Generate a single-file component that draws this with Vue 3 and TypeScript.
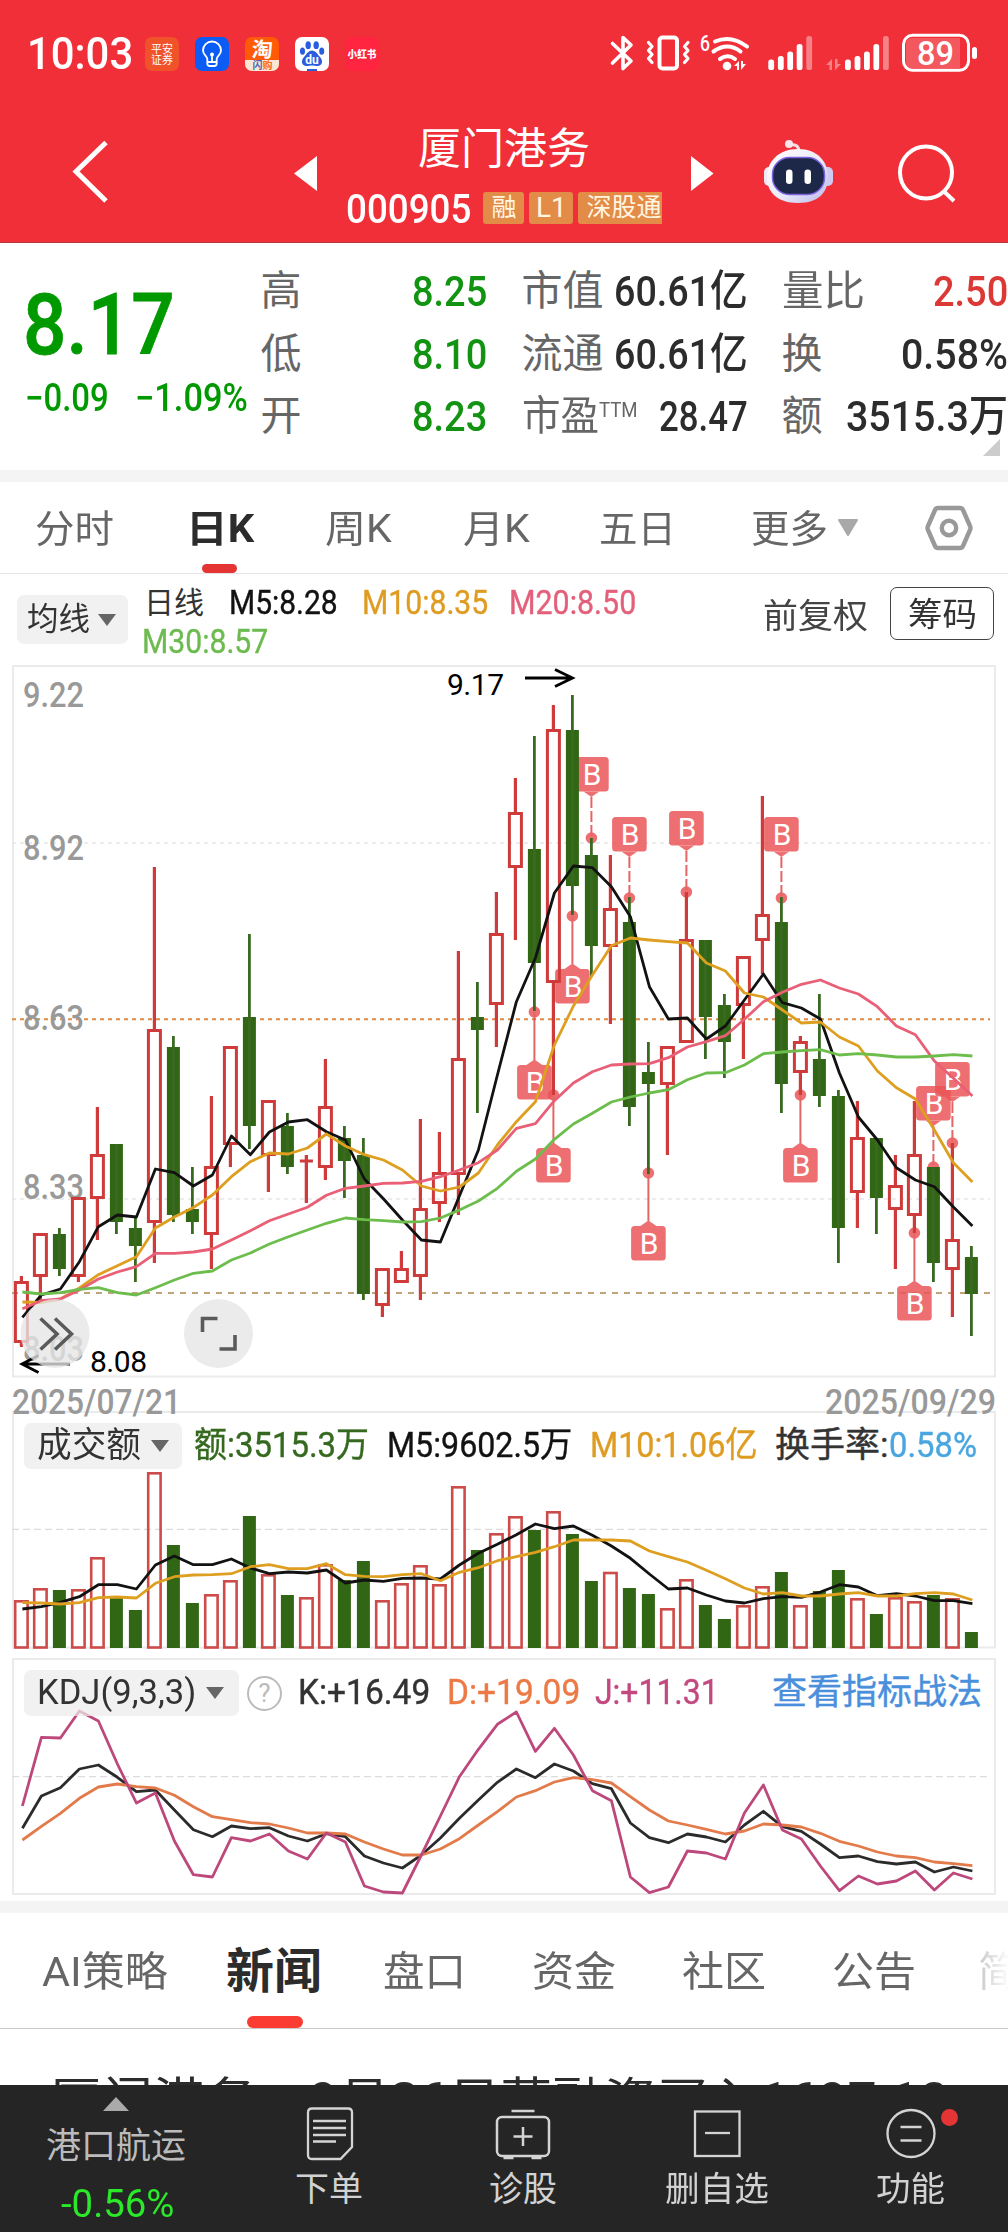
<script setup lang="ts">
import type { Directive } from 'vue'

const applyFit = (el: HTMLElement, width: number) => {
  const natural = el.offsetWidth
  if (!natural) return
  el.style.transform = `scaleX(${width / natural})`
  el.style.marginRight = `${width - natural}px`
}
const vFit: Directive<HTMLElement, number> = {
  mounted: (el, binding) => applyFit(el, binding.value),
}

type Candle = [number, number, number, number, number]
/* up(1) / down(0), high, body top, body bottom, low */
const candles: Candle[] = [
  [1, 1276, 1281, 1343, 1347], [1, 1233, 1233, 1277, 1300], [0, 1228, 1234, 1269, 1276], [1, 1197, 1197, 1277, 1282],
  [1, 1107, 1154, 1199, 1240], [0, 1144, 1144, 1222, 1234], [0, 1217, 1228, 1246, 1282], [1, 867, 1029, 1223, 1263],
  [0, 1036, 1047, 1215, 1222], [0, 1167, 1209, 1222, 1234], [1, 1096, 1166, 1235, 1269], [1, 1046, 1046, 1145, 1167],
  [0, 934, 1017, 1126, 1149], [1, 1100, 1100, 1156, 1192], [0, 1113, 1126, 1167, 1174], [1, 1155, 1159.5, 1162.5, 1203],
  [1, 1059, 1106, 1168, 1180], [0, 1126, 1138, 1161, 1198], [0, 1138, 1155, 1294, 1300], [1, 1268, 1268, 1306, 1317],
  [1, 1251, 1268, 1283, 1283], [1, 1119, 1208, 1277, 1300], [1, 1132, 1172, 1204, 1222], [1, 951, 1058, 1175, 1215],
  [0, 982, 1017, 1030, 1113], [1, 892, 933, 1005, 1047], [1, 778, 812, 868, 940], [0, 736, 849, 963, 1011],
  [1, 705, 729, 983, 1095], [0, 695, 730, 886, 915], [0, 838, 855, 946, 976], [1, 855, 908, 947, 1024],
  [0, 897, 922, 1107, 1126], [0, 1042, 1072, 1084, 1174], [1, 1046, 1046, 1085, 1155], [1, 892, 939, 1043, 1043],
  [0, 940, 940, 1017, 1059], [0, 994, 1005, 1042, 1078], [1, 956, 956, 1006, 1059], [1, 796, 914, 941, 974],
  [0, 897, 922, 1084, 1113], [1, 1036, 1041, 1073, 1095], [0, 994, 1059, 1096, 1107], [0, 1090, 1096, 1228, 1263],
  [1, 1101, 1137, 1193, 1228], [0, 1138, 1138, 1198, 1234], [1, 1155, 1185, 1210, 1269], [1, 1101, 1154, 1216, 1233],
  [0, 1167, 1167, 1263, 1282], [1, 1143, 1239, 1270, 1317], [0, 1246, 1257, 1294, 1336],
]
const cx = (i: number) => 21.4 + i * 19
const line = (ys: number[]) => ys.map((y, i) => `${(cx(i) + 1).toFixed(1)},${y}`).join(' ')

const ma = [
  { color: '#121212', pts: line([1317.3, 1295, 1289, 1261.7, 1226.7, 1215, 1217, 1169, 1172.7, 1186, 1175, 1136, 1154.7, 1132, 1122, 1119.7, 1131.7, 1140, 1179, 1198.7, 1220, 1240, 1242, 1196, 1150, 1075, 1001.7, 958, 893, 866, 867.7, 886.7, 916.7, 986.7, 1019, 1018, 1039, 1026, 1000, 974, 1002.7, 1008, 1019, 1073, 1117, 1140, 1167.7, 1180, 1186.7, 1207, 1226]) },
  { color: '#de9f20', pts: line([1302, 1302.5, 1299, 1288, 1274.7, 1265.7, 1256.7, 1228, 1217, 1207.5, 1195, 1176.7, 1161.7, 1153, 1154, 1148, 1134, 1146, 1154.7, 1160, 1170, 1186, 1191, 1187, 1173, 1145, 1121.7, 1101.7, 1045, 1006, 975, 945.7, 938, 940, 941.7, 943, 963, 971, 993, 997, 1010, 1023, 1022, 1037, 1046, 1071, 1087.7, 1099, 1130, 1162.7, 1182]) },
  { color: '#e85f76', pts: line([1308.7, 1300.7, 1299, 1290, 1279, 1272, 1266.7, 1253.3, 1253.3, 1252, 1249, 1240, 1230.7, 1220.7, 1214, 1207.3, 1195.3, 1188.3, 1186, 1183.3, 1183, 1181.3, 1176.7, 1170, 1162.7, 1150, 1128.3, 1123.7, 1100.7, 1083, 1071.7, 1065, 1064, 1063.7, 1057.7, 1047, 1041.7, 1035.7, 1019.3, 1001.7, 992.3, 984.3, 980, 988, 994, 1006.7, 1026, 1034.7, 1061, 1078.3, 1096]) },
  { color: '#6cbd4c', pts: line([1292, 1294, 1292.7, 1289.3, 1287.7, 1292.7, 1295, 1287.7, 1280, 1273.3, 1271, 1260, 1253, 1244, 1236.7, 1230, 1223.3, 1218, 1219.7, 1220.7, 1222, 1221.7, 1218, 1210, 1201, 1188.3, 1171.3, 1159, 1139.3, 1124, 1113.3, 1102, 1097, 1093, 1089.7, 1079.7, 1073, 1072.7, 1065, 1053.7, 1052, 1050.7, 1049.7, 1055, 1053.7, 1055, 1057, 1057, 1056, 1054.7, 1056]) },
]

/* Buy signals: candle index, anchor dot, whether the flag hangs above the dot */
const signals = [
  { i: 27, y: 1012, above: false }, { i: 28, y: 1095, above: false }, { i: 29, y: 916, above: false },
  { i: 30, y: 838, above: true }, { i: 32, y: 898, above: true }, { i: 33, y: 1173, above: false },
  { i: 35, y: 892, above: true }, { i: 40, y: 898, above: true }, { i: 41, y: 1095, above: false },
  { i: 47, y: 1233, above: false }, { i: 48, y: 1167, above: true }, { i: 49, y: 1143, above: true },
].map((s) => ({ ...s, x: cx(s.i), top: s.above ? s.y - 81 : s.y + 53 }))

const flagPath = (s: { x: number; top: number; above: boolean }) =>
  s.above
    ? `M${s.x - 8} ${s.top + 34.5}h16l-8 5.5z`
    : `M${s.x - 8} ${s.top}h16l-8 -5.5z`

const volumes = [1600, 1588, 1590, 1589, 1557, 1597.7, 1610, 1472, 1545, 1603, 1594, 1580, 1516, 1574, 1595, 1597, 1564, 1580, 1561, 1600, 1583, 1565, 1584, 1486, 1550, 1533, 1516, 1530, 1511, 1534, 1581, 1571.7, 1588, 1594, 1608, 1579, 1605, 1619, 1605, 1586, 1572, 1605, 1591, 1570, 1598, 1614, 1597, 1601, 1595, 1598, 1632]
const volumeMa = [
  { color: '#121212', pts: line([1609, 1606.7, 1602.3, 1596.7, 1584.7, 1584.7, 1589, 1565, 1556, 1564.7, 1564.7, 1559, 1568, 1573.7, 1572, 1573, 1570, 1583, 1580, 1581.3, 1578.3, 1578, 1579, 1565, 1553.3, 1544.3, 1534.7, 1524, 1528.7, 1526, 1535.3, 1546, 1558.3, 1574, 1589, 1588, 1595, 1601, 1603, 1598.7, 1596.7, 1597.3, 1592, 1584.7, 1587, 1595.7, 1593.7, 1596, 1600.7, 1600.7, 1603.7]) },
  { color: '#de9f20', pts: line([1602.7, 1603, 1604, 1602.7, 1597.7, 1597, 1598, 1583.3, 1576.7, 1575, 1574.7, 1573.7, 1566.7, 1564.7, 1568.7, 1568.7, 1563.7, 1574.7, 1576.3, 1576.7, 1574.7, 1573.7, 1580.7, 1572.3, 1567.7, 1560.7, 1556.7, 1552.3, 1546.7, 1540, 1540, 1540, 1541, 1551, 1556.7, 1562, 1570.3, 1578.7, 1588, 1594, 1592.7, 1596, 1596, 1594, 1592.7, 1596, 1596, 1593.7, 1592.7, 1594, 1600]) },
]
const kdj = [
  { color: '#2b2b2b', pts: line([1828.3, 1796, 1787.7, 1769, 1765, 1777.3, 1791.7, 1790, 1810, 1829.7, 1836.7, 1826, 1828.7, 1827.7, 1836, 1841, 1833.7, 1836.7, 1856, 1863, 1868, 1855, 1838, 1818.3, 1800, 1782.3, 1769, 1777.7, 1764, 1771, 1783.7, 1788.7, 1823, 1837.7, 1842.7, 1834, 1837, 1842, 1825, 1811.3, 1826.7, 1831.3, 1844, 1857.7, 1856, 1861.7, 1864, 1862, 1872, 1867, 1871]) },
  { color: '#e27a4a', pts: line([1840, 1826.3, 1813.3, 1798.3, 1787, 1784, 1786.7, 1788, 1795.3, 1806.7, 1816.7, 1819.7, 1822.7, 1824, 1828, 1833, 1833, 1834, 1842, 1849, 1855, 1855, 1849, 1838.7, 1825, 1811.7, 1797, 1790.7, 1782, 1777.7, 1779.7, 1783, 1796.7, 1810, 1821, 1825, 1829.3, 1834, 1831, 1824, 1825, 1827, 1833.3, 1841.3, 1846, 1852, 1856, 1857.7, 1862, 1863.7, 1865.7]) },
  { color: '#bd487c', pts: line([1806, 1737.3, 1738, 1711, 1721, 1764, 1803, 1793, 1841, 1874.7, 1877, 1837.7, 1841, 1834, 1851, 1859, 1833, 1842, 1886, 1892, 1893, 1855, 1816, 1776.7, 1749.3, 1724.3, 1712, 1751.3, 1728.3, 1755, 1790.7, 1800.7, 1877, 1892.7, 1887, 1851, 1853, 1859, 1813, 1785, 1830, 1839, 1866, 1890.7, 1876, 1884, 1881, 1871, 1890, 1873, 1879]) },
]
const priceTicks = [
  { label: '9.22', y: 707 }, { label: '8.92', y: 860 }, { label: '8.63', y: 1030 }, { label: '8.33', y: 1199 }, { label: '8.03', y: 1361 },
]
const bars = [
  { x: 0, y: 59.5 }, { x: 9.6, y: 56 }, { x: 19, y: 51.5 }, { x: 28.4, y: 44 }, { x: 38, y: 36 },
]
</script>

<template>
  <div class="page">
    <header class="head">
      <div class="status">
        <span class="clock" v-fit="106">10:03</span>
        <div class="apps">
          <svg class="app" viewBox="0 0 34 34"><rect width="34" height="34" rx="7" fill="#f0522a" /><g fill="#fff" font-size="11" text-anchor="middle"><text x="17" y="16" textLength="22">平安</text><text x="17" y="26.5" textLength="22">证券</text></g></svg>
          <svg class="app" viewBox="0 0 34 34"><rect width="34" height="34" rx="7" fill="#0b5cf5" /><g fill="none" stroke="#fff" stroke-width="1.8"><path d="M12.3 22c0-3-4.3-4.200-4.300-8.500a9 9 0 0 1 18 0c0 4.300-4.300 5.500-4.300 8.500v4.500c0 1.500-1 2.500-2.500 2.500h-4.400c-1.500 0-2.500-1-2.500-2.500zM12.300 25h9.400M17 18v7" /></g><circle cx="17" cy="17.500" r="2" fill="#fff" /></svg>
          <svg class="app" viewBox="0 0 34 34"><defs><clipPath id="tb"><rect width="34" height="34" rx="7" /></clipPath></defs><g clip-path="url(#tb)"><rect width="34" height="34" fill="#ff5a05" /><rect y="23" width="34" height="11" fill="#fbe6d6" /></g><text x="17" y="19.500" font-size="21" font-weight="700" fill="#fff" text-anchor="middle" transform="skewX(-4) translate(1 0)">淘</text><text x="17.500" y="32" font-size="10" font-weight="700" text-anchor="middle"><tspan fill="#4a68b8">闪</tspan><tspan fill="#ff6a10">购</tspan></text></svg>
          <svg class="app" viewBox="0 0 34 34"><rect width="34" height="34" rx="7" fill="#fff" /><g fill="#2a5ddd"><ellipse cx="13.200" cy="8.200" rx="2.700" ry="3.900" /><ellipse cx="21.200" cy="8.200" rx="2.700" ry="3.900" /><ellipse cx="7.500" cy="14.200" rx="2.500" ry="3.600" /><ellipse cx="26.700" cy="14.200" rx="2.500" ry="3.600" /><path d="M17 13.500c4 0 5.500 4 8 6.500 3.500 3.500 2.500 9-2.500 9-2 0-3.500-.5-5.500-.5s-3.500.5-5.500.5c-5 0-6-5.500-2.500-9 2.500-2.500 4-6.500 8-6.500z" /><rect x="12" y="32" width="10" height="2" /></g><text x="17" y="26.500" font-size="12" font-weight="700" fill="#fff" text-anchor="middle">du</text></svg>
          <svg class="app" viewBox="0 0 34 34"><rect width="34" height="34" rx="7" fill="#ff2440" /><text x="17" y="21" font-size="10" font-weight="900" fill="#fff" text-anchor="middle" textLength="29" lengthAdjust="spacingAndGlyphs">小红书</text></svg>
        </div>
        <div class="sys">
          <svg width="36" height="44" viewBox="604 32 36 44"><path d="M612.500 43.500L631 61l-8 7.500v-31l8 7.500-18.500 18" fill="none" stroke="#fff" stroke-width="3.600" stroke-linejoin="round" stroke-linecap="round" /></svg>
          <svg width="54" height="44" viewBox="640 32 54 44"><g fill="none" stroke="#fff" stroke-width="4" stroke-linejoin="round"><rect x="659.500" y="37.500" width="17.500" height="31" rx="3" /><path stroke-width="3.200" stroke-linecap="round" d="M648.500 42.500l3.500 4-3.500 4 3.500 4-3.500 4 3.500 4M688 42.500l-3.500 4 3.500 4-3.500 4 3.500 4-3.500 4" /></g></svg>
          <svg width="62" height="44" viewBox="694 32 62 44"><text x="700" y="51" font-size="22" font-weight="500" fill="#fff" textLength="10" lengthAdjust="spacingAndGlyphs">6</text><g fill="none" stroke="#fff" stroke-width="4" stroke-linecap="round"><path d="M715 41.500q16-7 32 5" /><path d="M713.500 51.500q14-10 27 0" /><path d="M720 59q8-5.500 15 0" /></g><circle cx="727" cy="66" r="4.300" fill="#fff" /><path d="M734 66l5-5v9h-2v-4zM746 64l-5 6v-9h2v3z" fill="#fff" /></svg>
          <svg width="60" height="44" viewBox="756 32 60 44"><rect v-for="b in bars" :key="b.x" :x="768.300 + b.x" :y="b.y" width="5.800" :height="70 - b.y" rx="2.600" fill="#fff" :opacity="b.x === 38 ? 0.4 : 1" /></svg>
          <svg width="78" height="44" viewBox="816 32 78 44"><path d="M826 65l6-6v11h-2.500v-5zM841 64l-6 6v-11h2.500v5z" fill="#fff" opacity=".4" /><rect v-for="b in bars" :key="b.x" :x="845 + b.x" :y="b.y" width="5.800" :height="70 - b.y" rx="2.600" fill="#fff" :opacity="b.x === 38 ? 0.4 : 1" /></svg>
          <svg width="90" height="44" viewBox="894 32 90 44"><rect x="903.500" y="35.300" width="65" height="35" rx="9" fill="none" stroke="#fff" stroke-width="3" /><path d="M912 38h48v30h-48q-6 0-6-6v-18q0-6 6-6z" fill="#fff" opacity=".2" /><rect x="972" y="47" width="5" height="12" rx="2.500" fill="#fff" /><text x="917" y="65" font-size="33" font-weight="500" fill="#fff" textLength="37" lengthAdjust="spacingAndGlyphs">89</text></svg>
        </div>
      </div>
      <div class="titlebar">
        <svg class="back" width="60" height="80" viewBox="60 132 60 80"><path d="M106 142.500L76 171.500l30 29.500" fill="none" stroke="#fff" stroke-width="5" /></svg>
        <svg class="prev" width="30" height="40" viewBox="290 153 30 40"><path d="M294 173.500L317 156v35z" fill="#fff" /></svg>
        <div class="name">
          <div class="title"><span v-fit="172">厦门港务</span></div>
          <div class="sub"><span class="code" v-fit="125">000905</span><i class="tag t1">融</i><i class="tag t2">L1</i><i class="tag t3">深股通</i></div>
        </div>
        <svg class="next" width="30" height="40" viewBox="688 153 30 40"><path d="M713.500 173.500L691 156v35z" fill="#fff" /></svg>
        <svg class="robot" width="74" height="70" viewBox="762 136 74 70">
          <defs><linearGradient id="shell" x1="0" y1="0" x2="1" y2="1"><stop offset="0" stop-color="#fff" /><stop offset=".55" stop-color="#eceaf8" /><stop offset="1" stop-color="#b9b7ec" /></linearGradient></defs>
          <path d="M789 145q10-2 10 7" fill="none" stroke="#f4dbe6" stroke-width="3" /><circle cx="789" cy="144" r="4" fill="#fbe4ea" />
          <rect x="764" y="167" width="12" height="19" rx="5" fill="#f0e9f5" /><rect x="821" y="167" width="12" height="19" rx="5" fill="#cfcaf2" />
          <path d="M798 149c20 0 30 13 30 28s-9 26-30 26-31-11-31-26 11-28 31-28z" fill="url(#shell)" />
          <rect x="772.500" y="157.500" width="52" height="37" rx="17" fill="#1d2747" stroke="#7b63e0" stroke-width="1.500" />
          <rect x="786" y="169.500" width="6.500" height="14.500" rx="3.200" fill="#fff" /><rect x="804.500" y="169.500" width="6.500" height="14.500" rx="3.200" fill="#fff" />
        </svg>
        <svg class="search" width="64" height="64" viewBox="896 142 64 64"><g fill="none" stroke="#fff" stroke-width="4"><circle cx="926" cy="172.500" r="26" /><path d="M943 190.500l11 10.500" /></g></svg>
      </div>
    </header>

    <section class="quote">
      <div class="main">
        <div class="price"><span v-fit="152">8.17</span></div>
        <div class="chg"><span class="c1" v-fit="84">−0.09</span><span v-fit="113">−1.09%</span></div>
      </div>
      <div class="stats">
        <div class="row">
          <b><span v-fit="41">高</span></b><em class="v1 g"><span v-fit="75">8.25</span></em>
          <b><span v-fit="82">市值</span></b><em class="v2"><span v-fit="134">60.61亿</span></em>
          <b><span v-fit="83">量比</span></b><em class="v3 r"><span v-fit="75">2.50</span></em>
        </div>
        <div class="row">
          <b><span v-fit="41">低</span></b><em class="v1 g"><span v-fit="75">8.10</span></em>
          <b><span v-fit="82">流通</span></b><em class="v2"><span v-fit="134">60.61亿</span></em>
          <b><span v-fit="41">换</span></b><em class="v3"><span v-fit="107">0.58%</span></em>
        </div>
        <div class="row">
          <b><span v-fit="41">开</span></b><em class="v1 g"><span v-fit="75">8.23</span></em>
          <b class="pe"><span v-fit="77">市盈</span><sup v-fit="39">TTM</sup></b><em class="v2"><span v-fit="89">28.47</span></em>
          <b><span v-fit="41">额</span></b><em class="v3"><span v-fit="162">3515.3万</span></em>
        </div>
      </div>
      <svg class="corner" width="17" height="17"><path d="M0 17L17 0v17z" fill="#ccc" /></svg>
    </section>
    <div class="gap"></div>

    <nav class="ktabs">
      <span v-fit="79">分时</span>
      <span class="on" v-fit="68">日K</span>
      <span v-fit="67">周K</span>
      <span v-fit="67">月K</span>
      <span v-fit="77">五日</span>
      <span v-fit="77">更多</span>
      <svg class="more" width="22" height="18"><path d="M2 1h18L11 16z" fill="#a8a8a8" stroke="#a8a8a8" stroke-width="2" stroke-linejoin="round" /></svg>
      <svg class="gear" width="48" height="48" viewBox="926 504 48 48"><g fill="none" stroke="#999" stroke-width="4.400" stroke-linejoin="round"><path d="M939 508h22q2 0 3 2l7 16q1 2 0 4l-7 16q-1 2-3 2h-22q-2 0-3-2l-7-16q-1-2 0-4l7-16q1-2 3-2z" /><circle cx="950" cy="528" r="7.200" /></g></svg>
      <i class="mark"></i>
    </nav>

    <section class="maline">
      <div class="pick p1"><span v-fit="63">均线</span><svg width="18" height="12"><path d="M0 0h18L9 12z" fill="#666" /></svg></div>
      <div class="legend">
        <div class="lrow"><span class="rx" v-fit="60">日线</span><span class="k" v-fit="109">M5:8.28</span><span class="y" v-fit="126">M10:8.35</span><span class="p" v-fit="127">M20:8.50</span></div>
        <div class="lrow"><span class="n" v-fit="126">M30:8.57</span></div>
      </div>
      <div class="adj"><span v-fit="105">前复权</span></div>
      <div class="chip"><span v-fit="69">筹码</span></div>
    </section>

    <section class="pricechart">
      <svg width="1008" height="756" viewBox="0 665 1008 756">
        <rect x="13" y="666" width="982" height="710.500" fill="none" stroke="#ebebeb" stroke-width="2" />
        <g fill="none" stroke-width="1.600"><path d="M12 843H990M12 1199H990" stroke="#e6e6e6" stroke-dasharray="4 4" /><path d="M12 1019.300H990" stroke="#de8a45" stroke-width="2" stroke-dasharray="4 4" /><path d="M12 1293H990" stroke="#c0a47c" stroke-width="2" stroke-dasharray="6 6" /></g>
        <g fill="#999" font-size="35" font-weight="500"><text v-for="t in priceTicks" :key="t.label" x="23" :y="t.y" textLength="61" lengthAdjust="spacingAndGlyphs">{{ t.label }}</text></g>
        <g v-for="s in signals" :key="s.i" fill="#ea5456" stroke="none">
          <g opacity=".84">
            <rect :x="s.x - 17.300" :y="s.top" width="34.600" height="34.500" rx="3.500" />
            <path :d="flagPath(s)" />
            <circle :cx="s.x" :cy="s.y" r="5.800" />
            <line :x1="s.x" :x2="s.x" :y1="s.above ? s.top + 40 : s.top - 5" :y2="s.y" stroke="#e04848" stroke-width="2" :stroke-dasharray="s.above ? '11 3' : undefined" />
          </g>
          <text :x="s.x + .6" :y="s.top + 27.500" font-size="30" fill="#fff" text-anchor="middle">B</text>
        </g>
        <g v-for="(c, i) in candles" :key="i">
          <template v-if="c[0]">
            <rect v-if="c[3] - c[2] > 4" :x="cx(i) - 6" :y="c[2] + 1.500" width="12" :height="c[3] - c[2] - 3" fill="none" stroke="#ce3b3a" stroke-width="3" />
            <rect v-else :x="cx(i) - 6.500" :y="c[2]" width="13" height="3" fill="#ce3b3a" />
            <path :d="`M${cx(i)} ${c[1]}V${c[2]}M${cx(i)} ${c[3]}V${c[4]}`" stroke="#ce3b3a" stroke-width="3.200" />
            <path v-if="c[3] - c[2] <= 4" :d="`M${cx(i)} ${c[1]}V${c[4]}`" stroke="#ce3b3a" stroke-width="3" />
          </template>
          <template v-else>
            <rect :x="cx(i) - 6.500" :y="c[2]" width="13" :height="c[3] - c[2]" fill="#316614" />
            <path :d="`M${cx(i)} ${c[1]}V${c[4]}`" stroke="#3a6a22" stroke-width="2.800" />
          </template>
        </g>
        <polyline v-for="m in ma" :key="m.color" :points="m.pts" fill="none" :stroke="m.color" stroke-width="2.800" stroke-linejoin="round" />
        <g fill="#000" font-size="30"><text x="447" y="695" textLength="57">9.17</text><text x="90" y="1372" textLength="57">8.08</text></g>
        <path d="M525 678H572M555 669.500L572.500 678L555 686.500M70 1364H22M38.500 1355.500L22 1364L38.500 1372.500" fill="none" stroke="#000" stroke-width="2.800" />
        <g fill="#999" font-size="35" font-weight="500"><text x="12" y="1413.500" textLength="169" lengthAdjust="spacingAndGlyphs">2025/07/21</text><text x="825" y="1413.500" textLength="171" lengthAdjust="spacingAndGlyphs">2025/09/29</text></g>
        <g fill="#e6e6e6" opacity=".78"><circle cx="55" cy="1333.500" r="34.500" /><circle cx="218.500" cy="1333.500" r="34.500" /></g>
        <path d="M40.500 1318.500L57 1334l-16.500 15.500M55 1318.500L71.500 1334 55 1349.500M202.500 1332v-13.500h15M235 1335v14h-15.500" fill="none" stroke="#5a5a5a" stroke-width="3.600" />
      </svg>
    </section>

    <section class="panel vol">
      <svg class="plot" width="1008" height="247" viewBox="0 1411 1008 247">
        <rect x="13" y="1412" width="982" height="235.500" fill="none" stroke="#ebebeb" stroke-width="2" />
        <path d="M12 1529.300H990" stroke="#dcdcdc" stroke-width="1.200" stroke-dasharray="7 4" />
        <template v-for="(v, i) in volumes" :key="i">
          <rect v-if="candles[i][0]" :x="cx(i) - 6.200" :y="v + 1.300" width="12.400" :height="1647.500 - v - 1.300" fill="none" stroke="#cd4c4a" stroke-width="2.600" />
          <rect v-else :x="cx(i) - 6.500" :y="v" width="13" :height="1648 - v" fill="#316614" />
        </template>
        <polyline v-for="m in volumeMa" :key="m.color" :points="m.pts" fill="none" :stroke="m.color" stroke-width="2.800" stroke-linejoin="round" />
      </svg>
      <div class="readout">
        <div class="pick p2"><span v-fit="104">成交额</span><svg width="18" height="12"><path d="M0 0h18L9 12z" fill="#666" /></svg></div>
        <span class="a1" v-fit="175">额:3515.3万</span><span class="a2" v-fit="185">M5:9602.5万</span><span class="a3" v-fit="168">M10:1.06亿</span><span class="a4" v-fit="113">换手率:</span><span class="a5" v-fit="88">0.58%</span>
      </div>
    </section>

    <section class="panel kdj">
      <svg class="plot" width="1008" height="243" viewBox="0 1658 1008 243">
        <rect x="13" y="1659" width="982" height="235" fill="none" stroke="#ebebeb" stroke-width="2" />
        <path d="M12 1776.600H990" stroke="#dcdcdc" stroke-width="1.200" stroke-dasharray="7 4" />
        <polyline v-for="m in kdj" :key="m.color" :points="m.pts" fill="none" :stroke="m.color" stroke-width="2.800" stroke-linejoin="round" />
      </svg>
      <div class="readout">
        <div class="pick p3"><span v-fit="159">KDJ(9,3,3)</span><svg width="18" height="12"><path d="M0 0h18L9 12z" fill="#666" /></svg></div>
        <i class="help">?</i>
        <span class="b1" v-fit="132">K:+16.49</span><span class="b2" v-fit="133">D:+19.09</span><span class="b3" v-fit="124">J:+11.31</span><span class="b4" v-fit="210">查看指标战法</span>
      </div>
    </section>
    <div class="gap"></div>

    <nav class="ntabs">
      <span v-fit="126">AI策略</span>
      <span class="on" v-fit="96">新闻</span>
      <span v-fit="83">盘口</span>
      <span v-fit="84">资金</span>
      <span v-fit="84">社区</span>
      <span v-fit="84">公告</span>
      <span class="fade">简况</span>
      <i class="mark"></i>
    </nav>
    <article class="news"><span v-fit="900">厦门港务：9月26日获融资买入1697.10</span></article>

    <footer class="foot">
      <div class="sector">
        <svg width="26" height="14"><path d="M0 14L13 0l13 14z" fill="#aaa" /></svg>
        <span class="s1" v-fit="140">港口航运</span>
        <span class="s2" v-fit="113">-0.56%</span>
      </div>
      <div class="act">
        <svg width="54" height="56" viewBox="301 2105 54 56"><path d="M311 2108.500h36q4 0 4 4v34.500l-11.500 12H311q-4 0-4-4v-42.500q0-4 4-4zM312 2121h33M312 2128h33M312 2135h33M312 2141.500h23" fill="none" stroke="#d4d4d4" stroke-width="2.300" /></svg>
        <span v-fit="68">下单</span>
      </div>
      <div class="act">
        <svg width="60" height="56" viewBox="492.500 2105 60 56"><g fill="none" stroke="#d4d4d4" stroke-width="2.500"><rect x="496.500" y="2117" width="52" height="39" rx="5" /><path d="M511 2111h23M522.500 2127v19M513 2136.500h19M503 2158h10M531 2158h10" /></g></svg>
        <span v-fit="68">诊股</span>
      </div>
      <div class="act">
        <svg width="54" height="56" viewBox="689 2105 54 56"><g fill="none" stroke="#d4d4d4" stroke-width="2.300"><rect x="694" y="2111.500" width="44.500" height="44.500" /><path d="M704 2133h25" /></g></svg>
        <span v-fit="104">删自选</span>
      </div>
      <div class="act">
        <svg width="54" height="56" viewBox="883.500 2105 54 56"><g fill="none" stroke="#d4d4d4" stroke-width="2.300"><circle cx="910.500" cy="2133.500" r="23.500" /><path d="M900 2127h21M900 2140.500h21" /></g></svg>
        <i class="dot"></i>
        <span v-fit="69">功能</span>
      </div>
    </footer>
  </div>
</template>

<style>
body { margin: 0; background: #fff; }
</style>

<style scoped>
.page { width: 1008px; height: 2232px; overflow: hidden; background: #fff; color: #333; font-family: Roboto, "Noto Sans CJK SC", sans-serif; display: flex; flex-direction: column; position: relative; }
.page > * { flex: none; }
svg { display: block; flex: none; }
span, sup { display: inline-block; white-space: nowrap; transform-origin: 0 50%; flex: none; }
i, em, b { font-style: normal; font-weight: 400; }

.head { height: 243px; background: #f12f38; color: #fff; box-shadow: inset 0 -1px #b4383c; }
.status { height: 108px; display: flex; align-items: center; box-sizing: border-box; padding-left: 27px; }
.clock { font-size: 45px; line-height: 54px; font-weight: 500; }
.apps { display: flex; gap: 16px; margin-left: 12px; }
.app { width: 34px; height: 34px; }
.sys { display: flex; margin-left: 225px; }
.titlebar { height: 135px; display: flex; align-items: flex-start; }
.back { margin: 24px 0 0 60px; }
.prev { margin: 45px 0 0 170px; }
.name { width: 342px; margin: 16px 0 0 26px; }
.title { font-size: 43px; line-height: 50px; padding: 0 0 0 72px; height: 50px; }
.sub { display: flex; align-items: center; height: 36px; margin-top: 16px; }
.code { font-size: 40px; line-height: 44px; font-weight: 500; margin-top: 3px; }
.tag { background: #e28c48; color: #fff6e2; height: 32px; line-height: 32px; font-size: 25px; border-radius: 3px; text-align: center; }
.t1 { width: 41px; margin-left: 12px; }
.t2 { width: 44px; margin-left: 5px; font-size: 28px; }
.t3 { width: 84px; margin-left: 5px; border-radius: 3px 0 0 3px; padding-left: 0; text-indent: 7px; overflow: hidden; white-space: nowrap; }
.next { margin: 45px 0 0 0; }
.robot { margin: 28px 0 0 44px; }
.search { margin: 34px 0 0 60px; }

.quote { height: 227px; display: flex; position: relative; }
.main { width: 262px; color: #090; }
.price { padding: 33px 0 0 23px; font-size: 86px; line-height: 98px; height: 98px; font-weight: 500; -webkit-text-stroke: .8px #090; }
.chg { display: flex; padding-left: 25px; margin-top: 1px; font-size: 38px; line-height: 46px; font-weight: 500; }
.chg span + span { position: relative; left: 26px; }
.stats { width: 746px; padding-top: 17px; }
.row { display: grid; grid-template-columns: 81px 180px 81px 179px 80px 145px; height: 62.500px; align-items: center; line-height: 62px; }
.row b { font-size: 41px; color: #666; display: flex; white-space: nowrap; margin-left: -1.5px; }
.row em { font-size: 43px; font-weight: 500; color: #2c2c2c; display: flex; justify-content: flex-end; }
.v1 { padding-right: 36px; }
.v2 { padding-right: 35px; }
.row em.g { color: #129312; }
.row em.r { color: #dc3836; }
.pe sup { font-size: 21px; line-height: 30px; margin-top: 10px; vertical-align: baseline; }
.corner { position: absolute; right: 8px; bottom: 14px; }
.gap { height: 12px; background: #f4f4f4; }

.ktabs { height: 92px; border-bottom: 1px solid #e4e4e4; display: flex; align-items: center; position: relative; font-size: 38px; line-height: 50px; color: #666; padding-left: 35px; box-sizing: border-box; }
.ktabs span { margin-top: 3px; }
.ktabs span:nth-of-type(2) { position: relative; left: 72px; }
.ktabs span:nth-of-type(3) { position: relative; left: 143px; }
.ktabs span:nth-of-type(4) { position: relative; left: 214px; }
.ktabs span:nth-of-type(5) { position: relative; left: 283px; }
.ktabs span:nth-of-type(6) { position: relative; left: 358px; }
.ktabs .on { font-weight: 700; color: #2c2c2c; }
.more { margin-left: 367px; }
.gear { margin-left: 66px; }
.mark { position: absolute; left: 202px; bottom: 0; width: 35px; height: 9px; border-radius: 4.500px; background: #e53434; }

.maline { height: 91px; display: flex; align-items: flex-start; }
.pick { background: rgba(236, 236, 236, .72); border-radius: 7px; display: flex; align-items: center; box-sizing: border-box; }
.p1 { width: 111px; height: 49px; margin: 21px 0 0 17px; padding-left: 10px; font-size: 32px; line-height: 49px; gap: 8px; }
.legend { width: 497px; margin: 9px 0 0 16px; font-size: 33px; font-weight: 500; }
.lrow { display: flex; height: 39px; line-height: 39px; font-weight: 400; -webkit-text-stroke: .4px currentColor; }
.lrow span { position: relative; }
.rx { left: 0; font-size: 30px; -webkit-text-stroke: 0; }
.k { color: #121212; left: 25px; }
.y { color: #df9c22; left: 49px; }
.p { color: #e4607a; left: 70px; }
.n { color: #6dbb50; left: -2px; }
.adj { width: 127px; margin: 17px 0 0 122px; font-size: 34px; line-height: 50px; color: #444; }
.chip { width: 104px; height: 53px; box-sizing: border-box; margin-top: 13px; border: 1px solid #444; border-radius: 7px; font-size: 33px; line-height: 53px; padding-left: 17px; }

.pricechart { height: 746px; position: relative; z-index: 1; }
.panel { position: relative; }
.vol { height: 247px; }
.kdj { height: 243px; }
.plot { position: absolute; left: 0; top: 0; }
.readout { position: relative; display: flex; align-items: center; padding: 12px 0 0 24px; height: 46px; font-size: 35px; line-height: 46px; -webkit-text-stroke: .4px currentColor; }
.readout > span { position: relative; }
.p2, .p3 { height: 46px; font-size: 35px; gap: 10px; padding-left: 13px; -webkit-text-stroke: 0; }
.p2 { width: 158px; }
.p3 { width: 215px; }
.a1 { color: #35691f; left: 12px; }
.a2 { color: #121212; left: 30px; }
.a3 { color: #df9c22; left: 48px; }
.a4 { left: 65px; }
.a5 { color: #4aa6e0; left: 66px; }
.help { width: 31px; height: 31px; border: 2px solid #bbb; border-radius: 50%; color: #bbb; font-size: 26px; line-height: 31px; text-align: center; margin-left: 8px; -webkit-text-stroke: 0; }
.b1 { left: 16px; }
.b2 { left: 33px; color: #ec7a46; }
.b3 { left: 48px; color: #c2497f; }
.b4 { left: 101px; color: #4a8fdc; }

.ntabs { height: 116px; box-sizing: border-box; border-bottom: 1px solid #c8c8c8; display: flex; align-items: center; position: relative; font-size: 41px; line-height: 60px; color: #666; padding-left: 42px; }
.ntabs span { position: relative; margin-top: 2px; }
.ntabs .on { left: 58px; font-size: 48px; font-weight: 700; color: #2c2c2c; }
.ntabs span:nth-of-type(3) { left: 119px; }
.ntabs span:nth-of-type(4) { left: 185px; }
.ntabs span:nth-of-type(5) { left: 251px; }
.ntabs span:nth-of-type(6) { left: 317px; }
.ntabs .fade { left: 379px; width: 30px; overflow: hidden; background: linear-gradient(90deg, #c8c8c8, #fff 32px); background-clip: text; -webkit-background-clip: text; color: transparent; }
.ntabs .mark { left: 247px; width: 56px; height: 12px; border-radius: 6px; background: #fb3c32; }
.news { height: 56px; padding-left: 49px; overflow: hidden; font-size: 46px; line-height: 60px; color: #2c2c2c; }
.news span { margin-top: 40px; }

.foot { height: 147px; background: #252525; display: flex; color: #d2d2d2; }
.sector { width: 232px; display: flex; flex-direction: column; align-items: flex-start; }
.sector svg { margin: 12px 0 0 103px; }
.s1 { font-size: 35px; line-height: 42px; margin: 15px 0 0 46px; color: #bbb; }
.s2 { font-size: 38px; line-height: 44px; margin: 14px 0 0 61px; color: #2be82b; }
.act { width: 194px; display: grid; justify-content: center; justify-items: center; grid-template-columns: auto; position: relative; align-content: start; padding-top: 20px; font-size: 34px; }
.act span { line-height: 44px; margin-top: 6px; transform-origin: 0 50%; }
.act:last-child { width: 193px; }
.dot { position: absolute; left: 127px; top: 24px; width: 17px; height: 17px; border-radius: 50%; background: #e53434; }
</style>
